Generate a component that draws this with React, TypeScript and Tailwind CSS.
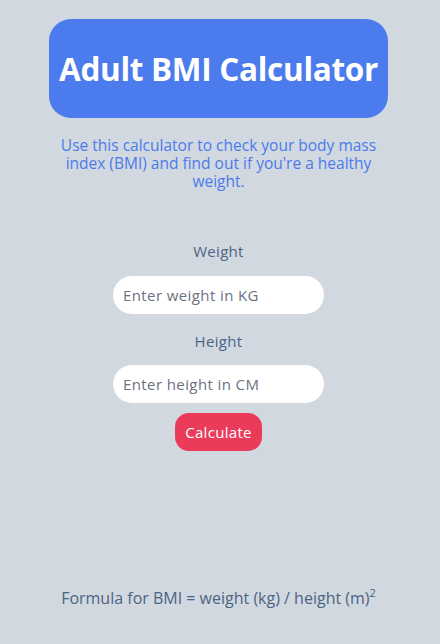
import React from "react";

export default function App() {
  return (
    <div className="min-h-[644px] w-full bg-[#d1d8e0] flex flex-col items-center pt-[19px] pr-[3px] font-['Open_Sans',sans-serif]">
      <div className="w-[339px] h-[99px] rounded-[22px] bg-[#4b7bec] flex items-center justify-center">
        <h1 className="text-white font-bold text-[31.5px] tracking-[-0.3px] leading-none">Adult BMI Calculator</h1>
      </div>
      <p className="w-[339px] mt-[18px] text-center text-[#4b7bec] text-[15.5px] leading-[18px]">
        Use this calculator to check your body mass index (BMI) and find out if you're a healthy weight.
      </p>
      <div className="mt-[51px] flex flex-col items-center">
        <label className="text-[#4b6584] text-[15px] tracking-[0.3px] leading-[20px]">Weight</label>
        <input
          className="mt-[15px] w-[211px] h-[38px] rounded-full bg-white px-[10px] text-[15px] tracking-[0.4px] text-[#4b6584] placeholder:text-[#6b7280] outline-none"
          placeholder="Enter weight in KG"
        />
        <label className="mt-[17px] text-[#4b6584] text-[15px] tracking-[0.3px] leading-[20px]">Height</label>
        <input
          className="mt-[14px] w-[211px] h-[38px] rounded-full bg-white px-[10px] text-[15px] tracking-[0.4px] text-[#4b6584] placeholder:text-[#6b7280] outline-none"
          placeholder="Enter height in CM"
        />
        <button className="mt-[10px] w-[87px] h-[38px] rounded-[14px] bg-[#eb3b5a] text-white text-[15px] tracking-[0.3px]">
          Calculate
        </button>
      </div>
      <p className="mt-[137px] text-[#4b6584] text-[16px] leading-[20px]">
        Formula for BMI = weight (kg) / height (m)<sup className="text-[11px] relative -top-[7px]">2</sup>
      </p>
    </div>
  );
}
